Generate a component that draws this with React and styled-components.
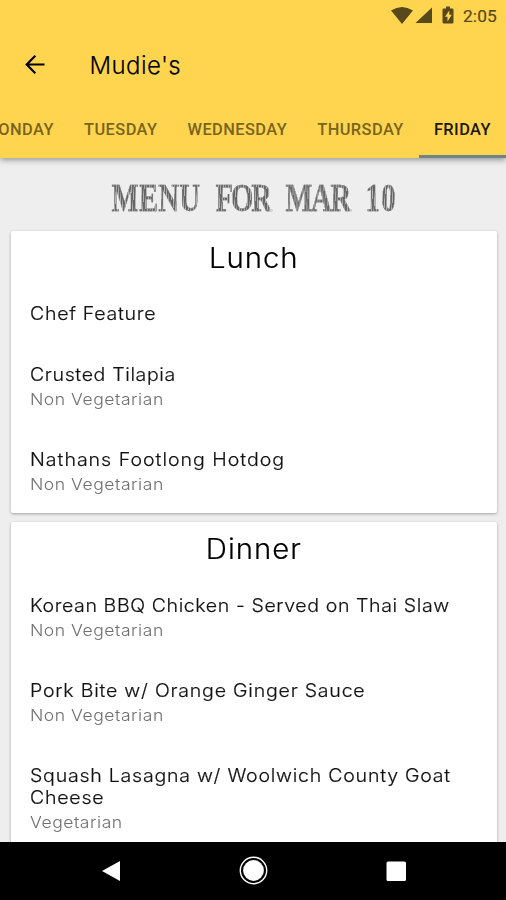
import React from 'react';
import styled, { createGlobalStyle } from 'styled-components';

const GlobalStyle = createGlobalStyle`
  * {
    box-sizing: border-box;
  }

  body {
    margin: 0;
    font-family: Inter, 'Open Sans', sans-serif;
  }

  h1, h2, h3, p {
    margin: 0;
    font-weight: 400;
  }
`;

const Screen = styled.div`
  width: 506px;
  height: 900px;
  display: flex;
  flex-direction: column;
  overflow: hidden;
  background: #eeeeee;
`;

const Header = styled.header`
  flex: none;
  height: 158px;
  display: flex;
  flex-direction: column;
  background: #ffd54f;
  box-shadow: 0 2px 6px rgba(0, 0, 0, 0.38);
  z-index: 1;
`;

const StatusBar = styled.div`
  height: 32px;
  display: flex;
  justify-content: flex-end;
  padding-right: 9px;
  color: #57491b;

  svg {
    display: block;
  }

  span {
    margin-left: 7px;
    font: 400 17.3px/32px Roboto, sans-serif;
    letter-spacing: 0.2px;
    -webkit-text-stroke: 0.2px #57491b;
  }
`;

const Toolbar = styled.div`
  height: 66px;
  display: flex;
  align-items: center;
  padding-left: 24px;

  svg {
    display: block;
    margin-right: 43.5px;
  }

  h1 {
    font-size: 24px;
    font-weight: 300;
    line-height: 66px;
    letter-spacing: 0.4px;
    padding-top: 1px;
    -webkit-text-stroke: 0.15px #000;
  }
`;

const Tabs = styled.nav`
  height: 60px;
  display: flex;
  justify-content: flex-end;
  overflow: hidden;
`;

const Tab = styled.div`
  flex: none;
  padding: 0 15.1px;
  font: 500 16.4px/63px Roboto, sans-serif;
  letter-spacing: 0.42px;
  color: ${({ $active }) => ($active ? '#1b1708' : '#79641f')};
  border-bottom: ${({ $active }) => ($active ? '3px solid #6f8388' : 'none')};
`;

const Content = styled.main`
  flex: 1;
  min-height: 0;
  overflow: hidden;
  padding: 0 9px 0 10.5px;
`;

const DateTitle = styled.h2`
  height: 72.5px;
  display: flex;
  justify-content: center;
  gap: 22px;
  transform: scaleX(0.7);
`;

const Word = styled.span`
  flex: none;
  font: 700 41px/78px 'Liberation Serif', serif;
  letter-spacing: ${({ $spacing }) => $spacing}px;
  color: transparent;
  background: repeating-linear-gradient(96deg, #666 0 2px, #b0b0b0 2.8px 3.6px);
  -webkit-background-clip: text;
  background-clip: text;
  -webkit-text-stroke: 0.4px #8c8c8c;
`;

const Card = styled.section`
  height: ${({ $height }) => $height}px;
  margin-bottom: 9px;
  padding: 0 19.5px;
  background: #fff;
  border-radius: 2px;
  box-shadow: 0 1px 3px rgba(0, 0, 0, 0.32);

  h2 {
    height: 71.5px;
    text-align: center;
    font-size: 28px;
    font-weight: 300;
    line-height: 54.5px;
    letter-spacing: 0.9px;
    transform: scaleX(1.05);
    -webkit-text-stroke: 0.2px #000;
  }
`;

const Item = styled.div`
  margin-bottom: ${({ $plain }) => ($plain ? 39 : 38)}px;
  transform: scaleX(1.07);
  transform-origin: left;

  h3 {
    font-size: 18.3px;
    font-weight: 300;
    line-height: 22px;
    letter-spacing: ${({ $spacing }) => $spacing}px;
    color: #111;
    white-space: pre;
    -webkit-text-stroke: 0.2px #111;
  }

  p {
    padding-top: 3px;
    font-size: 16.4px;
    font-weight: 300;
    line-height: 22px;
    letter-spacing: 0.5px;
    color: #707070;
  }
`;

const NavBar = styled.footer`
  flex: none;
  height: 58px;
  background: #000;

  svg {
    display: block;
  }
`;

const meals = [
  {
    name: 'Lunch',
    height: 282.5,
    items: [
      { name: 'Chef Feature', spacing: 0.66 },
      { name: 'Crusted Tilapia', type: 'Non Vegetarian', spacing: 0.58 },
      { name: 'Nathans Footlong Hotdog', type: 'Non Vegetarian', spacing: 0.92 },
    ],
  },
  {
    name: 'Dinner',
    height: 360,
    items: [
      { name: 'Korean BBQ Chicken - Served on Thai Slaw', type: 'Non Vegetarian', spacing: 0.55 },
      { name: 'Pork Bite w/ Orange Ginger Sauce', type: 'Non Vegetarian', spacing: 0.72 },
      { name: 'Squash Lasagna w/ Woolwich County Goat\nCheese', type: 'Vegetarian', spacing: 0.7 },
    ],
  },
];

const days = ['MONDAY', 'TUESDAY', 'WEDNESDAY', 'THURSDAY', 'FRIDAY'];

const StatusIcons = () => (
  <svg width='68' height='32' viewBox='388 0 68 32' fill='currentColor'>
    <path d='M391 10.5Q402 3.5 413 10.5L402 24Z' />
    <path d='M432 7.5V23H415.5Z' />
    <path
      fillRule='evenodd'
      d='M446 6.5h4v2h2.2q1.3 0 1.3 1.3v12.4q0 1.3-1.3 1.3h-8.4q-1.3 0-1.3-1.3V9.8q0-1.3 1.3-1.3h2.2ZM449.3 10.5l-4.3 6.3h2.5v4.7l4.3-6.7h-2.5Z'
    />
  </svg>
);

const BackArrow = () => (
  <svg width='22' height='22' viewBox='0 0 22 22' fill='none' stroke='#000' strokeWidth='2.2'>
    <path d='M20.5 10.5H3M11.3 1.7L2.7 10.5l8.6 8.8' />
  </svg>
);

const Meal = ({ meal }) => (
  <Card $height={meal.height}>
    <h2>{meal.name}</h2>
    {meal.items.map((item) => (
      <Item key={item.name} $spacing={item.spacing} $plain={!item.type}>
        <h3>{item.name}</h3>
        {item.type && <p>{item.type}</p>}
      </Item>
    ))}
  </Card>
);

const App = () => {
  return (
    <Screen>
      <GlobalStyle />
      <Header>
        <StatusBar>
          <StatusIcons />
          <span>2:05</span>
        </StatusBar>
        <Toolbar>
          <BackArrow />
          <h1>Mudie's</h1>
        </Toolbar>
        <Tabs>
          {days.map((day) => (
            <Tab key={day} $active={day === 'FRIDAY'}>
              {day}
            </Tab>
          ))}
        </Tabs>
      </Header>
      <Content>
        <DateTitle>
          <Word $spacing={0.3}>MENU</Word>
          <Word $spacing={-3}>FOR</Word>
          <Word $spacing={-1.8}>MAR</Word>
          <Word $spacing={2}>10</Word>
        </DateTitle>
        {meals.map((meal) => (
          <Meal key={meal.name} meal={meal} />
        ))}
      </Content>
      <NavBar>
        <svg width='506' height='58' viewBox='0 842 506 58'>
          <path d='M102 871L120 861v20Z' fill='#fff' />
          <circle cx='253.5' cy='870.5' r='13.2' fill='none' stroke='#fff' strokeWidth='1.4' />
          <circle cx='253.5' cy='870.5' r='10.4' fill='#fff' />
          <rect x='386.5' y='861.5' width='19.5' height='19.5' rx='1.5' fill='#fff' />
        </svg>
      </NavBar>
    </Screen>
  );
};

export default App;
